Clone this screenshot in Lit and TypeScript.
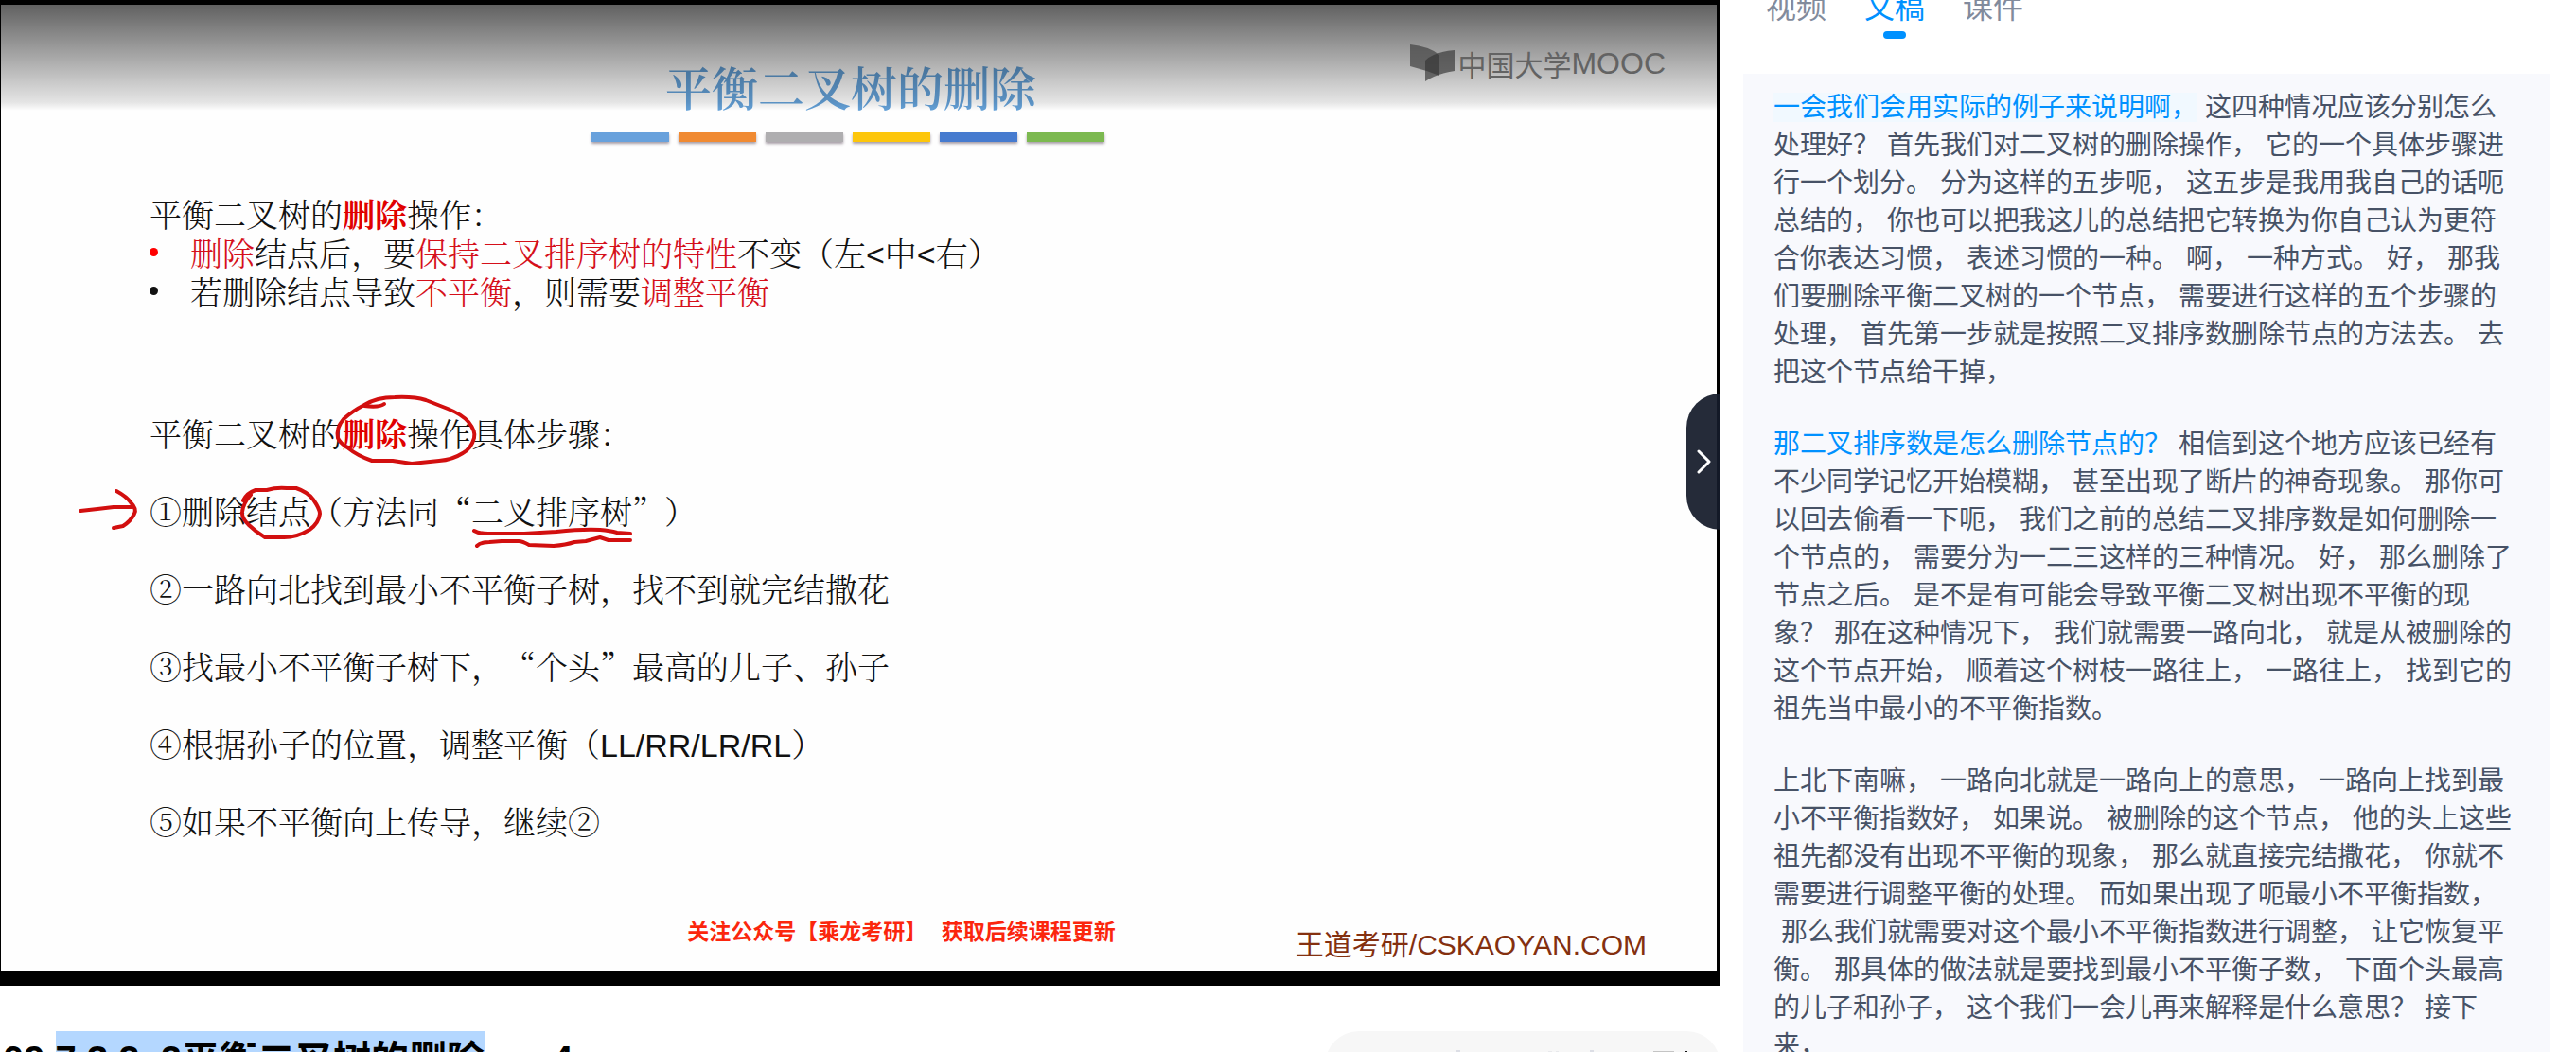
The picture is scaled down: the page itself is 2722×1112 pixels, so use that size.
import { LitElement, html, css } from "lit";
import { customElement, state } from "lit/decorators.js";

interface Sentence {
  text: string;
  state?: "current" | "hot";
}

const TRANSCRIPT: Sentence[][] = [
  [
    { text: "一会我们会用实际的例子来说明啊，", state: "current" },
    { text: "这四种情况应该分别怎么处理好？" },
    { text: "首先我们对二叉树的删除操作，" },
    { text: "它的一个具体步骤进行一个划分。" },
    { text: "分为这样的五步呃，" },
    { text: "这五步是我用我自己的话呃总结的，" },
    { text: "你也可以把我这儿的总结把它转换为你自己认为更符合你表达习惯，" },
    { text: "表述习惯的一种。" },
    { text: "啊，" },
    { text: "一种方式。" },
    { text: "好，" },
    { text: "那我们要删除平衡二叉树的一个节点，" },
    { text: "需要进行这样的五个步骤的处理，" },
    { text: "首先第一步就是按照二叉排序数删除节点的方法去。" },
    { text: "去把这个节点给干掉，" },
  ],
  [
    { text: "那二叉排序数是怎么删除节点的？", state: "hot" },
    { text: "相信到这个地方应该已经有不少同学记忆开始模糊，" },
    { text: "甚至出现了断片的神奇现象。" },
    { text: "那你可以回去偷看一下呃，" },
    { text: "我们之前的总结二叉排序数是如何删除一个节点的，" },
    { text: "需要分为一二三这样的三种情况。" },
    { text: "好，" },
    { text: "那么删除了节点之后。" },
    { text: "是不是有可能会导致平衡二叉树出现不平衡的现象？" },
    { text: "那在这种情况下，" },
    { text: "我们就需要一路向北，" },
    { text: "就是从被删除的这个节点开始，" },
    { text: "顺着这个树枝一路往上，" },
    { text: "一路往上，" },
    { text: "找到它的祖先当中最小的不平衡指数。" },
  ],
  [
    { text: "上北下南嘛，" },
    { text: "一路向北就是一路向上的意思，" },
    { text: "一路向上找到最小不平衡指数好，" },
    { text: "如果说。" },
    { text: "被删除的这个节点，" },
    { text: "他的头上这些祖先都没有出现不平衡的现象，" },
    { text: "那么就直接完结撒花，" },
    { text: "你就不需要进行调整平衡的处理。" },
    { text: "而如果出现了呃最小不平衡指数，" },
    { text: "那么我们就需要对这个最小不平衡指数进行调整，" },
    { text: "让它恢复平衡。" },
    { text: "那具体的做法就是要找到最小不平衡子数，" },
    { text: "下面个头最高的儿子和孙子，" },
    { text: "这个我们一会儿再来解释是什么意思？" },
    { text: "接下来，" },
  ],
];

@customElement("lecture-slide")
class LectureSlide extends LitElement {
  static styles = css`
    :host {
      display: block;
      position: relative;
      background: #000;
      padding: 5px 4px 16px 1px;
    }
    .slide {
      position: relative;
      display: flex;
      flex-direction: column;
      box-sizing: border-box;
      padding: 61px 74px 10px 157px;
      background: #fefefe;
      color: #111;
      font-family: "Noto Serif CJK SC", "Noto Sans CJK SC", serif;
      font-weight: 300;
      font-size: 34px;
      overflow: hidden;
      text-spacing-trim: space-all;
    }
    .shade {
      position: absolute;
      inset: 0 0 auto 0;
      height: 112px;
      background: linear-gradient(rgba(0, 0, 0, 0.62), rgba(0, 0, 0, 0.1) 92%, transparent);
    }
    .title {
      margin: 0 100px 0 0;
      text-align: center;
      font-size: 49px;
      line-height: 50px;
      font-weight: 600;
      color: #64a1d8;
    }
    .bars {
      display: flex;
      justify-content: center;
      gap: 10px;
      margin: 24px 107px 0 0;
    }
    .bar {
      width: 82px;
      height: 10px;
      box-shadow: 0 2px 3px rgba(60, 40, 60, 0.45);
    }
    .blue { background: #68a1dc; }
    .orange { background: #f08a32; }
    .grey { background: #afaeb0; }
    .yellow { background: #fdc60b; }
    .navy { background: #467bcf; }
    .green { background: #7cb950; }
    .intro {
      margin: 55px 0 0;
      line-height: 41px;
    }
    .points {
      list-style: none;
      margin: 0;
      padding: 0;
      line-height: 41px;
    }
    .point {
      display: flex;
      align-items: center;
    }
    .point::before {
      content: "";
      width: 9px;
      height: 9px;
      border-radius: 50%;
      background: #111;
      margin-right: 34px;
    }
    .point.alert::before { background: #f00; }
    .steps {
      margin: 89px 0 0;
      padding: 0;
      list-style: none;
      line-height: 82px;
    }
    .red { color: #d5101b; }
    .strong { color: #e00000; font-weight: 700; }
    .latin {
      font-family: "Liberation Sans", sans-serif;
      font-weight: 400;
      line-height: 1;
    }
    .credits {
      display: flex;
      justify-content: flex-end;
      gap: 190px;
      margin-top: 53px;
      line-height: 34px;
      white-space: nowrap;
    }
    .follow {
      font: 700 23px/34px "Noto Sans CJK SC", sans-serif;
      margin-top: 4px;
      color: #fb260d;
    }
    .school {
      font: 400 30px/34px "Liberation Sans", "Noto Sans CJK SC", sans-serif;
      margin-top: 20px;
      color: #84300f;
    }
    .ink {
      position: absolute;
      left: -1px;
      top: -5px;
      fill: none;
      stroke: #d20f0f;
      stroke-width: 4;
      stroke-linecap: round;
      stroke-linejoin: round;
    }
    .brand {
      position: absolute;
      right: 54px;
      top: 42px;
      display: flex;
      align-items: center;
      gap: 2px;
      color: #636363;
      white-space: nowrap;
    }
    .row {
      display: flex;
      align-items: center;
      font: 400 30px/40px "Noto Sans CJK SC", sans-serif;
    }
    .mooc { font: 400 32px/40px "Liberation Sans", sans-serif; }
    .toggle {
      position: absolute;
      right: 0;
      top: 416px;
      width: 36px;
      height: 144px;
      padding: 0 0 0 2px;
      border: 0;
      border-radius: 36px 0 0 36px;
      background: rgba(20, 27, 42, 0.93);
      display: grid;
      place-items: center;
    }
  `;

  render() {
    return html`
      <article class="slide">
        <h2 class="title">平衡二叉树的删除</h2>
        <div class="bars">
          ${["blue", "orange", "grey", "yellow", "navy", "green"].map(
            (c) => html`<span class="bar ${c}"></span>`
          )}
        </div>
        <p class="intro">平衡二叉树的<b class="strong">删除</b>操作：</p>
        <ul class="points">
          <li class="point alert">
            <span><span class="red">删除</span>结点后，要<span class="red">保持二叉排序树的特性</span>不变（左<span class="latin">&lt;</span>中<span class="latin">&lt;</span>右）</span>
          </li>
          <li class="point">
            <span>若删除结点导致<span class="red">不平衡</span>，则需要<span class="red">调整平衡</span></span>
          </li>
        </ul>
        <ul class="steps">
          <li>平衡二叉树的<b class="strong">删除</b>操作具体步骤：</li>
          <li>①删除结点（方法同“二叉排序树”）</li>
          <li>②一路向北找到最小不平衡子树，找不到就完结撒花</li>
          <li>③找最小不平衡子树下，“个头”最高的儿子、孙子</li>
          <li>④根据孙子的位置，调整平衡（<span class="latin">LL/RR/LR/RL</span>）</li>
          <li>⑤如果不平衡向上传导，继续②</li>
        </ul>
        <div class="credits">
          <span class="follow">关注公众号【乘龙考研】&nbsp;&nbsp; 获取后续课程更新</span>
          <span class="school">王道考研/CSKAOYAN.COM</span>
        </div>
        <svg class="ink" width="700" height="600" viewBox="0 0 700 600" aria-hidden="true">
          <path d="M406 427 Q401 431 385 429" />
          <path d="M357 463 Q355 452 363 443 Q373 434 385 428 Q398 420 417 420 Q437 419 450 423 L473 432 Q488 438 495 446 Q503 456 501 463 Q498 474 489 479 Q478 486 464 487 L435 490 L415 487 L393 487 Q378 482 367 473 Q359 468 357 463Z" />
          <path d="M257 529 Q261 521 270 518 L282 518 Q292 515 303 516 H313 Q325 520 331 528 Q338 538 338 543 Q337 553 327 560 Q314 568 300 568 H280 Q270 562 263 555 Q255 547 256 541 Q257 532 265 523" />
          <path d="M85 540 L103 538 L120 536 H140" />
          <path d="M123 519 Q134 525 138 531 Q145 538 142 543 Q138 551 130 556 L120 558" />
          <path d="M501 561 Q506 564 516 564 H554 L588 562 Q616 559 634 560 Q645 561 652 563 L666 564" />
          <path d="M504 577 Q508 573 517 573 L530 572 H548 Q552 572 559 576 L585 577 Q598 576 607 573 L619 572 L634 568 L643 571 H666" />
        </svg>
        <div class="shade"></div>
        <div class="brand">
          <svg width="48" height="40" viewBox="0 0 48 40" aria-hidden="true">
            <path d="M0 0 Q20 2 31 11 V33 Q16 27 0 23Z" fill="#444" fill-opacity=".72" />
            <path d="M16 17 Q25 8 47 6 V28 Q28 31 16 39Z" fill="#333" fill-opacity=".66" />
          </svg>
          <span class="row">中国大学<span class="mooc">MOOC</span></span>
        </div>
      </article>
      <button class="toggle" aria-label="收起">
        <svg width="16" height="26" viewBox="0 0 16 26" aria-hidden="true">
          <path d="M2 2 L13 13 L2 24" fill="none" stroke="#fff" stroke-width="3" stroke-linecap="round" stroke-linejoin="round" />
        </svg>
      </button>
    `;
  }
}

@customElement("transcript-panel")
class TranscriptPanel extends LitElement {
  @state() active = "文稿";

  static styles = css`
    :host {
      display: flex;
      flex-direction: column;
      min-width: 0;
      padding: 0 28px 0 24px;
      font-family: "Liberation Sans", "Noto Sans CJK SC", sans-serif;
    }
    .tabs {
      display: flex;
      align-items: flex-end;
      gap: 40px;
      height: 41px;
      flex: none;
      padding-left: 24px;
      margin-bottom: 37px;
    }
    .tab {
      display: flex;
      flex-direction: column;
      align-items: center;
      gap: 8px;
      padding: 0;
      border: 0;
      background: none;
      font: 400 32px/40px "Noto Sans CJK SC", sans-serif;
      color: #828b9c;
    }
    .tab::after {
      content: "";
      width: 24px;
      height: 8px;
      border-radius: 4px;
    }
    .tab.active { color: #0091ff; }
    .tab.active::after { background: #0091ff; }
    .sheet {
      flex: 1;
      padding: 16px 34px 16px 32px;
      background: #f8f9fd;
    }
    .para {
      margin: 0 0 36px;
      font-size: 28px;
      line-height: 40px;
      color: #475266;
      text-spacing-trim: space-all;
    }
    .sentence + .sentence { margin-left: 8px; }
    .hot { color: #0091ff; }
    .current { color: #0091ff; background: #f1f9ff; }
  `;

  render() {
    return html`
      <div class="tabs" role="tablist">
        ${["视频", "文稿", "课件"].map(
          (t) => html`<button
            class="tab ${t === this.active ? "active" : ""}"
            role="tab"
            aria-selected=${t === this.active}
            @click=${() => (this.active = t)}
          >${t}</button>`
        )}
      </div>
      <div class="sheet">
        ${TRANSCRIPT.map(
          (p) => html`<p class="para">${p.map(
            (s) => html`<span class="sentence ${s.state ?? ""}">${s.text}</span>`
          )}</p>`
        )}
      </div>
    `;
  }
}

@customElement("app-root")
class AppRoot extends LitElement {
  static styles = css`
    :host {
      display: grid;
      grid-template-columns: minmax(0, 1fr) 904px;
      height: 100vh;
      overflow: hidden;
      background: #fff;
      font-family: "Liberation Sans", "Noto Sans CJK SC", sans-serif;
    }
    .main { min-width: 0; }
    .caption {
      display: flex;
      justify-content: space-between;
      align-items: flex-start;
      padding: 48px 0 0 3px;
    }
    .name {
      margin: 0;
      font-size: 40px;
      line-height: 60px;
      font-weight: 700;
      color: #000;
      white-space: nowrap;
      text-spacing-trim: space-all;
    }
    .picked {
      display: inline-block;
      background: #b4d7ff;
      color: inherit;
    }
    .pill {
      width: 418px;
      height: 72px;
      box-sizing: border-box;
      border-radius: 36px;
      background: #f7f7f7;
      padding-top: 20px;
    }
  `;

  render() {
    return html`
      <main class="main">
        <lecture-slide></lecture-slide>
        <div class="caption">
          <h1 class="name">09.<mark class="picked">7.3.2_2平衡二叉树的删除</mark>.mp4</h1>
          <div class="pill">
            <svg width="418" height="32" viewBox="0 0 418 32" aria-hidden="true">
              <path d="M139 0h4v28h-4zM280 0h4v28h-4z" fill="#dcdee5" />
              <path d="M347 1h22v2h-22z" fill="#c4c4c4" />
              <path d="M380 1h3v26h-3z" fill="#111" />
              <path d="M236 1h4v1h-4zM244 1h3v1h-3z" fill="#e8e9ec" />
            </svg>
          </div>
        </div>
      </main>
      <transcript-panel></transcript-panel>
    `;
  }
}
